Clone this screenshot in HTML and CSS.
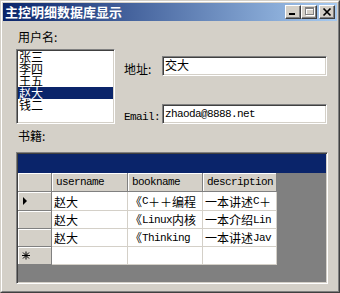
FILE: index.html
```html
<!DOCTYPE html>
<html>
<head>
<meta charset="utf-8">
<link rel="stylesheet" href="styles.css">
</head>
<body>
<div class="window">
  <div class="frame">
    <div class="titlebar">
      <span class="title">主控明细数据库显示</span>
      <div class="tbtns">
        <span class="tb"><svg width="14" height="12" viewBox="0 0 14 12"><rect x="3" y="7" width="6" height="2" fill="#000"/></svg></span>
        <span class="tb"><svg width="14" height="12" viewBox="0 0 14 12"><path d="M3 1h9v8h-9z M4 3h7v5h-7z" fill="#fff" fill-rule="evenodd" transform="translate(1 1)"/><path d="M3 1h9v8h-9z M4 3h7v5h-7z" fill="#808080" fill-rule="evenodd"/></svg></span>
        <span class="tb close"><svg width="14" height="12" viewBox="0 0 14 12"><path d="M3.5 2.5 L10.5 9.5 M10.5 2.5 L3.5 9.5" stroke="#000" stroke-width="1.7" fill="none"/></svg></span>
      </div>
    </div>
    <div class="client">
      <div class="label">用户名:</div>
      <div class="top">
        <div class="listbox">
          <div class="item">张三</div>
          <div class="item">李四</div>
          <div class="item">王五</div>
          <div class="item sel">赵大</div>
          <div class="item">钱二</div>
        </div>
        <div class="fields">
          <div class="field">
            <span class="flabel">地址:</span>
            <div class="textbox">交大</div>
          </div>
          <div class="field">
            <span class="flabel m">Email:</span>
            <div class="textbox m">zhaoda@8888.net</div>
          </div>
        </div>
      </div>
      <div class="label books">书籍:</div>
      <div class="grid">
        <div class="caption"></div>
        <div class="gridbody">
          <div class="table">
            <div class="hc"></div>
            <div class="hc m">username</div>
            <div class="hc m">bookname</div>
            <div class="hc m">description</div>

            <div class="rh"><svg width="8" height="10" viewBox="0 0 8 10"><polygon points="2,1 6,5 2,9" fill="#000"/></svg></div>
            <div class="dc">赵大</div>
            <div class="dc">《<span class="m">C</span>＋＋编程</div>
            <div class="dc">一本讲述<span class="m">C</span>＋</div>

            <div class="rh"></div>
            <div class="dc">赵大</div>
            <div class="dc">《<span class="m">Linux</span>内核</div>
            <div class="dc">一本介绍<span class="m">Lin</span></div>

            <div class="rh"></div>
            <div class="dc">赵大</div>
            <div class="dc">《<span class="m">Thinking</span></div>
            <div class="dc">一本讲述<span class="m">Jav</span></div>

            <div class="rh"><svg width="10" height="9" viewBox="0 0 10 9"><path d="M5 0.5V8.5 M1 4.5H9 M2 1.5L8 7.5 M8 1.5L2 7.5" stroke="#000" stroke-width="1" fill="none"/></svg></div>
            <div class="dc"></div>
            <div class="dc"></div>
            <div class="dc"></div>
          </div>
        </div>
      </div>
    </div>
  </div>
</div>
</body>
</html>
```
FILE: styles.css
```css
html, body {
  margin: 0;
  padding: 0;
}
body {
  width: 340px;
  height: 293px;
  overflow: hidden;
  background: #d4d0c8;
  font-family: "Noto Sans CJK SC", sans-serif;
  font-size: 12px;
  color: #000;
}
.m {
  font-family: "Liberation Mono", monospace;
  font-size: 11px;
  letter-spacing: -0.6px;
}
.window {
  box-sizing: border-box;
  width: 340px;
  height: 293px;
  border: 1px solid;
  border-color: #d4d0c8 #404040 #404040 #d4d0c8;
  background: #d4d0c8;
}
.frame {
  box-sizing: border-box;
  height: 100%;
  border: 1px solid;
  border-color: #fff #808080 #808080 #fff;
  padding: 1px;
  display: flex;
  flex-direction: column;
}
.titlebar {
  height: 18px;
  flex: none;
  background: linear-gradient(to right, #0a246a, #a6caf0);
  display: flex;
  align-items: center;
  padding: 0 2px;
}
.title {
  flex: 1;
  color: #fff;
  font-weight: bold;
  font-size: 13px;
  line-height: 18px;
  white-space: nowrap;
}
.tbtns {
  display: flex;
}
.tb {
  box-sizing: border-box;
  width: 16px;
  height: 14px;
  background: #d4d0c8;
  border: 1px solid;
  border-color: #fff #404040 #404040 #fff;
  box-shadow: inset -1px -1px 0 #808080;
  display: flex;
}
.tb svg {
  display: block;
}
.tb.close {
  margin-left: 2px;
}
.client {
  flex: 1;
  padding: 9px 0 0 13px;
}
.label {
  line-height: 14px;
  margin-left: 2px;
}
.top {
  display: flex;
  margin-top: 5px;
}
.listbox {
  box-sizing: border-box;
  width: 99px;
  height: 75px;
  background: #fff;
  border: 1px solid;
  border-color: #808080 #fff #fff #808080;
  box-shadow: inset 1px 1px 0 #404040, inset -1px -1px 0 #d4d0c8;
  padding: 1px;
}
.item {
  line-height: 12px;
  height: 12px;
  padding-left: 1px;
  white-space: nowrap;
}
.item.sel {
  background: #0a246a;
  color: #fff;
}
.fields {
  margin-left: 9px;
  padding-top: 7px;
  display: flex;
  flex-direction: column;
  gap: 28px;
}
.field {
  display: flex;
  align-items: flex-end;
}
.flabel {
  width: 38px;
  line-height: 14px;
  white-space: nowrap;
}
.textbox {
  box-sizing: border-box;
  width: 165px;
  height: 20px;
  background: #fff;
  border: 1px solid;
  border-color: #808080 #fff #fff #808080;
  box-shadow: inset 1px 1px 0 #404040, inset -1px -1px 0 #d4d0c8;
  padding: 1px 2px;
  line-height: 14px;
  white-space: nowrap;
}
.textbox.m {
  line-height: 16px;
}
.books {
  margin-top: 5px;
}
.grid {
  box-sizing: border-box;
  margin-top: 9px;
  width: 312px;
  height: 132px;
  border: 1px solid;
  border-color: #808080 #fff #fff #808080;
  box-shadow: inset 1px 1px 0 #404040, inset -1px -1px 0 #d4d0c8;
  padding: 1px;
  display: flex;
  flex-direction: column;
}
.caption {
  height: 19px;
  flex: none;
  background: #0a246a;
}
.gridbody {
  flex: 1;
  background: #808080;
}
.table {
  display: grid;
  grid-template-columns: 34px 76px 75px 74px;
  grid-template-rows: 19px 19px 18px 18px 18px;
  width: max-content;
}
.hc, .rh {
  box-sizing: border-box;
  background: #d4d0c8;
  border-right: 1px solid #808080;
  border-bottom: 1px solid #808080;
  box-shadow: inset 1px 1px 0 #fff;
  display: flex;
  align-items: center;
  padding-left: 4px;
  white-space: nowrap;
  overflow: hidden;
}
.rh {
  padding-left: 3px;
}
.dc {
  box-sizing: border-box;
  background: #fff;
  border-right: 1px solid #d4d0c8;
  border-bottom: 1px solid #d4d0c8;
  display: flex;
  align-items: center;
  padding-left: 2px;
  white-space: nowrap;
  overflow: hidden;
}
```
